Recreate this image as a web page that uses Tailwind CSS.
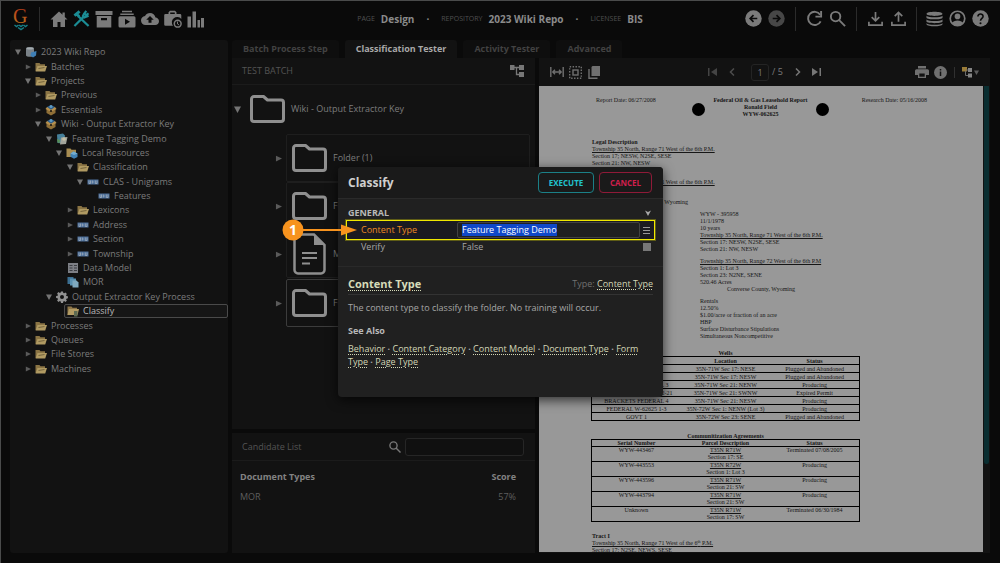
<!DOCTYPE html>
<html lang="en">
<head>
<meta charset="utf-8">
<meta name="viewport" content="width=device-width, initial-scale=1">
<title>Design - 2023 Wiki Repo</title>
<script src="https://cdn.jsdelivr.net/npm/@tailwindcss/browser@4"></script>
</head>
<body class="bg-[#0a0a0a] font-['Open_Sans','Noto_Sans',sans-serif] text-[9px] leading-[14px] text-[#7c7c7c]">
<svg class="hidden" aria-hidden="true">
  <symbol id="down" viewBox="0 0 6 6"><path fill="#747474" d="M0 .5h6L3 6z"/></symbol>
  <symbol id="right" viewBox="0 0 6 6"><path fill="#5a5a5a" d="M.8.6v5L6 3.1z"/></symbol>
  <symbol id="fold" viewBox="0 0 12 10"><path fill="#8a7444" d="M.5 1h4l1 1.300H10V9H.5z"/><path fill="#b09a62" d="M2.500 4H12l-1.800 5.500H.6z"/><path stroke="#5c4d2c" stroke-width=".7" d="M3.500 6.500l6-1"/></symbol>
  <symbol id="box" viewBox="0 0 12 12"><path fill="#2f5f8c" d="M2 3l4-2 4 2v3H2z"/><path fill="#8f6f37" d="M1.500 5.500L6 8l4.500-2.500V9L6 11.500 1.500 9z"/><path fill="#b58f4d" d="M.5 5L2 3l4 2.500L4.500 7.500zM11.500 5L10 3 6 5.500l1.500 2z"/><path fill="#2f5f8c" d="M3 3.500L6 2l3 1.500-3 1.800z"/><circle cx="6" cy="2.500" r="1.500" fill="#5f9ac0"/></symbol>
  <symbol id="repo" viewBox="0 0 12 12"><path fill="#7a8288" d="M1 2.500C1 .6 9 .6 9 2.500V9.500C9 11.200 1 11.200 1 9.500z"/><ellipse cx="5" cy="2.600" rx="3.500" ry="1" fill="#a4abb0"/><path fill="#3f7fb5" d="M6 6.500l5.500-1.500L11 9.500 8 11.500 5.500 9.500z"/></symbol>
  <symbol id="model" viewBox="0 0 12 12"><path fill="#46809a" d="M1 1.500L7 .5l2 2-1 8-6.500-.5z"/><path fill="#a2a49b" d="M5 4.500l6.500-.5L10 11 4 11.500z"/><circle cx="8" cy="6" r="1.800" fill="#c4bfa5"/><path fill="#5a9058" d="M1 6l3 1-.5 3-2-.5z"/></symbol>
  <symbol id="res" viewBox="0 0 12 12"><path fill="#a88d52" d="M.5 1.500h4l1 1.200H10V10H.5z"/><path fill="#4182b5" d="M7.500 4.500L11.500 6.500V10L8 11.800 4.500 9.800V6.500z"/><path fill="#75aed0" d="M7.500 4.500l4 2L8 8 4.500 6.500z"/></symbol>
  <symbol id="ext" viewBox="0 0 12 8"><path fill="#4c6f9a" d="M.5 1.500h11v5H.5z"/><path stroke="#9aa8b8" fill="none" stroke-width=".9" d="M2 2.500v3h1.500v-3M5.300 2.500v3M5.300 4h1.400M8.300 2.500v3H10v-3"/></symbol>
  <symbol id="data" viewBox="0 0 12 12"><path fill="#7d7f85" d="M1 1h10v10H1z"/><path stroke="#3b3d42" d="M2.500 3.500h3M2.500 6h3M2.500 8.500h3M7 3.500h3M7 6h3M7 8.500h3"/></symbol>
  <symbol id="docs" viewBox="0 0 12 12"><path fill="#3b6f92" d="M.5 1h6v7h-6z"/><path fill="#5b91b0" d="M3 2.500h6v7H3z"/><path fill="#7fa9bf" d="M5.500 4.500h4l2 2v5h-6z"/></symbol>
  <symbol id="gear" viewBox="0 0 24 24"><path fill="#929292" fill-rule="evenodd" d="M10 1h4l.6 3 1.700.7L19 3l2.800 2.800-1.700 2.600.7 1.700 3 .6v4l-3 .6-.7 1.700L21.800 19 19 21.800l-2.700-1.700-1.700.7-.6 3h-4l-.6-3-1.700-.7L5 21.800 2.200 19l1.700-2.600-.7-1.700-3-.6v-4l3-.6.7-1.700L2.200 5 5 2.200l2.700 1.700 1.700-.7zM12 8a4 4 0 100 8 4 4 0 000-8z"/></symbol>
  <symbol id="step" viewBox="0 0 12 12"><path fill="#8f7748" d="M.5 1.500h4l1 1.200H10V10H.5z"/><path fill="#b39c64" d="M2 4h10l-1.500 6H.5z"/><path fill="#5d6a52" d="M7 6h3.500v5.500H7z"/></symbol>
  <symbol id="folder" viewBox="0 0 35 28"><path fill="none" stroke="#8f8f8f" stroke-width="3" stroke-linejoin="round" d="M4 1.500h9.500L17.500 5H31a2.500 2.500 0 012.500 2.500V24a2.500 2.500 0 01-2.500 2.500H4A2.500 2.500 0 011.500 24V4A2.500 2.500 0 014 1.500z"/></symbol>
</svg>

<div class="flex min-h-screen flex-col border-t border-l border-[#4a4b4b] pr-[10px] pb-[10px] pl-[9px]">
  <header class="grid h-[39px] shrink-0 grid-cols-[1fr_auto_1fr] items-center pb-[4px]">
    <nav class="flex items-center gap-[5px]" aria-label="Tools">
      <a href="#" aria-label="Home page" class="mr-[5px] ml-[3px] block">
        <svg class="h-[24px] w-[16px]" viewBox="0 0 16 24"><defs><linearGradient id="g" x2="0" y2="1"><stop offset="0" stop-color="#b8321a"/><stop offset="1" stop-color="#b8761c"/></linearGradient></defs><text x="0" y="16" font-family="Liberation Serif, serif" font-size="20" fill="url(#g)">G</text><path fill="none" stroke="#177f86" stroke-width="1.500" d="M1.500 18l2 1.500 2-1.500M6 18l2 1.500 2-1.500M10.500 18l2 1.500 2-1.500M5 20.500l3 2 3-2"/></svg>
      </a>
      <span class="mr-[5px] h-[24px] w-px bg-[#2b2b2b]"></span>
      <button aria-label="Home"><svg class="size-[18px]" viewBox="0 0 18 18" fill="#7b7b7b"><path d="M9 1.500l3.500 3.300V2.500h2.300V7L17.500 9.500H15V17h-4.500v-5h-3v5H3V9.500H.5z"/></svg></button>
      <button aria-label="Design"><svg class="size-[17px]" viewBox="0 0 18 18" fill="none" stroke="#1b8c94"><path stroke-width="2.300" d="M5.500 6.500L16.500 17M1.500 17L12 6.500"/><path stroke-width="3" d="M1.500 6L7 1.500M3.500 4l3 3"/><path stroke-width="2.300" d="M16.500 3.500l-2.800 2-1.700-1.700L14 1M12 3.500l-1.500 3 1.500 1.500 4.500-2"/></svg></button>
      <button aria-label="Batches"><svg class="size-[18px]" viewBox="0 0 18 18" fill="#7b7b7b"><path d="M.5 1h17v4H.5zM1.700 6h14.600v11.500H1.700zM6 8v2.200h6V8z" fill-rule="evenodd"/></svg></button>
      <button aria-label="Tasks"><svg class="size-[18px]" viewBox="0 0 18 18" fill="#7b7b7b"><path d="M4 .8h10v1.500H4zM2.300 3.500h13.400V5H2.300zM2 6.300h14a1.500 1.500 0 011.500 1.500V16a1.500 1.500 0 01-1.500 1.500H2A1.500 1.500 0 01.5 16V7.800A1.500 1.500 0 012 6.300zM7 8.800v6l5-3z" fill-rule="evenodd"/></svg></button>
      <button aria-label="Imports"><svg class="size-[18px]" viewBox="0 0 24 24" fill="#7b7b7b"><path d="M19.350 10.040C18.670 6.590 15.640 4 12 4 9.110 4 6.600 5.640 5.350 8.040 2.340 8.360 0 10.910 0 14c0 3.310 2.690 6 6 6h13c2.760 0 5-2.240 5-5 0-2.640-2.050-4.780-4.650-4.960zM14 13v4h-4v-4H7l5-5 5 5h-3z"/></svg></button>
      <button aria-label="Jobs"><svg class="size-[18px]" viewBox="0 0 18 18" fill="#7b7b7b"><path fill-rule="evenodd" d="M6 .7h5l1.500 1.600V4H16a1.300 1.300 0 011.300 1.300V9A5 5 0 009 15.700H1.500A1.300 1.300 0 01.2 14.400V5.300A1.300 1.300 0 011.500 4h3V2.300zM6.200 2.500V4h4.600V2.500z"/><circle cx="13.700" cy="13.700" r="3.400" fill="#0a0a0a" stroke="#7b7b7b" stroke-width="1.500"/><path d="M13.500 11.500v2.500l1.700 1" fill="none" stroke="#7b7b7b"/></svg></button>
      <button aria-label="Statistics"><svg class="size-[18px]" viewBox="0 0 18 18" fill="#7b7b7b"><path d="M.5 6.500h3.500v11H.5zM5.500 1.500H9v16H5.500zM10.500 10H13v7.500h-2.500zM14 8h3v9.500h-3z"/></svg></button>
    </nav>
    <div class="flex items-center text-[10px] font-bold text-[#8a8a8a]">
      <span class="mr-[6px] text-[7px] font-normal text-[#505050]">PAGE</span>Design
      <span class="mx-[12px]">·</span>
      <span class="mr-[6px] text-[7px] font-normal text-[#505050]">REPOSITORY</span>2023 Wiki Repo
      <span class="mx-[12px]">·</span>
      <span class="mr-[6px] text-[7px] font-normal text-[#505050]">LICENSEE</span>BIS
    </div>
    <div class="flex items-center justify-end gap-[6px] pr-px">
      <button aria-label="Back"><svg class="size-[17px]" viewBox="0 0 18 18"><circle cx="9" cy="9" r="8.700" fill="#7b7b7b"/><path d="M13 9H5.500M9 5.500L5.500 9 9 12.500" fill="none" stroke="#0a0a0a" stroke-width="1.800"/></svg></button>
      <button aria-label="Forward"><svg class="size-[17px]" viewBox="0 0 18 18"><circle cx="9" cy="9" r="8.700" fill="#474747"/><path d="M5 9h7.500M9 5.500L12.500 9 9 12.500" fill="none" stroke="#0a0a0a" stroke-width="1.800"/></svg></button>
      <span class="mx-[4px] h-[24px] w-px bg-[#2b2b2b]"></span>
      <button aria-label="Refresh"><svg class="size-[17px]" viewBox="0 0 18 18" fill="none" stroke="#7b7b7b" stroke-width="2"><path d="M15 5A7 7 0 1015.500 12"/><path d="M16 1v6h-6"/></svg></button>
      <button aria-label="Search"><svg class="size-[17px]" viewBox="0 0 18 18" fill="none" stroke="#7b7b7b" stroke-width="2"><circle cx="7" cy="7" r="5"/><path d="M10.500 10.500l6.500 6.500"/></svg></button>
      <span class="mx-[4px] h-[24px] w-px bg-[#2b2b2b]"></span>
      <button aria-label="Download"><svg class="size-[17px]" viewBox="0 0 18 18" fill="none" stroke="#7b7b7b" stroke-width="1.800"><path d="M9 2v9M5 7.500l4 4 4-4M2 12.500V16h14v-3.500"/></svg></button>
      <button aria-label="Upload"><svg class="size-[17px]" viewBox="0 0 18 18" fill="none" stroke="#7b7b7b" stroke-width="1.800"><path d="M9 12.500V3M5 6.500l4-4 4 4M2 12.500V16h14v-3.500"/></svg></button>
      <span class="mx-[3px] h-[24px] w-px bg-[#2b2b2b]"></span>
      <button aria-label="Repository"><svg class="size-[17px]" viewBox="0 0 18 18" fill="#7b7b7b"><path d="M.5 4C.5 1 17.500 1 17.500 4S.5 7 .5 4zM.5 6c2 2.200 15 2.200 17 0v2.200c-1 2.300-16 2.300-17 0zM.5 10c2 2.200 15 2.200 17 0v2.200c-1 2.300-16 2.300-17 0zM.5 14c2 2.200 15 2.200 17 0v1c-1 3-16 3-17 0z"/></svg></button>
      <button aria-label="Account"><svg class="size-[17px]" viewBox="0 0 18 18"><circle cx="9" cy="9" r="7.700" fill="none" stroke="#7b7b7b" stroke-width="1.800"/><circle cx="9" cy="6.800" r="3" fill="#7b7b7b"/><path fill="#7b7b7b" d="M3 14c2-4 10-4 12 0-3 4-9 4-12 0z"/></svg></button>
      <button aria-label="Help"><svg class="size-[17px]" viewBox="0 0 18 18"><circle cx="9" cy="9" r="8.700" fill="#7b7b7b"/><path d="M6.300 7C6.300 3.200 11.800 3.500 11.700 7 11.700 9 9 9 9 11.500" fill="none" stroke="#0a0a0a" stroke-width="1.700"/><circle cx="9" cy="14" r="1.100" fill="#0a0a0a"/></svg></button>
    </div>
  </header>

  <main class="grid flex-1 grid-cols-[218px_1fr] gap-[4px]">
    <nav class="rounded-[3px] bg-[#121212] pt-[5px]" aria-label="Node tree">
      <ul class="grid min-h-[331px] auto-rows-fr leading-[12px] *:flex *:items-center *:gap-[4px] *:whitespace-nowrap">
        <li class="pl-[5px]"><svg class="size-[6px]"><use href="#down"/></svg><svg class="size-[12px]"><use href="#repo"/></svg>2023 Wiki Repo</li>
        <li class="pl-[15px]"><svg class="size-[6px]"><use href="#right"/></svg><svg class="h-[10px] w-[12px]"><use href="#fold"/></svg>Batches</li>
        <li class="pl-[15px]"><svg class="size-[6px]"><use href="#down"/></svg><svg class="h-[10px] w-[12px]"><use href="#fold"/></svg>Projects</li>
        <li class="pl-[25px]"><svg class="size-[6px]"><use href="#right"/></svg><svg class="h-[10px] w-[12px]"><use href="#fold"/></svg>Previous</li>
        <li class="pl-[25px]"><svg class="size-[6px]"><use href="#right"/></svg><svg class="size-[12px]"><use href="#box"/></svg>Essentials</li>
        <li class="pl-[25px]"><svg class="size-[6px]"><use href="#down"/></svg><svg class="size-[12px]"><use href="#box"/></svg>Wiki - Output Extractor Key</li>
        <li class="pl-[36px]"><svg class="size-[6px]"><use href="#down"/></svg><svg class="size-[12px]"><use href="#model"/></svg>Feature Tagging Demo</li>
        <li class="pl-[46px]"><svg class="size-[6px]"><use href="#down"/></svg><svg class="size-[12px]"><use href="#res"/></svg>Local Resources</li>
        <li class="pl-[57px]"><svg class="size-[6px]"><use href="#down"/></svg><svg class="h-[10px] w-[12px]"><use href="#fold"/></svg>Classification</li>
        <li class="pl-[67px]"><svg class="size-[6px]"><use href="#down"/></svg><svg class="h-[8px] w-[12px]"><use href="#ext"/></svg>CLAS - Unigrams</li>
        <li class="pl-[88px]"><svg class="h-[8px] w-[12px]"><use href="#ext"/></svg>Features</li>
        <li class="pl-[57px]"><svg class="size-[6px]"><use href="#right"/></svg><svg class="h-[10px] w-[12px]"><use href="#fold"/></svg>Lexicons</li>
        <li class="pl-[57px]"><svg class="size-[6px]"><use href="#right"/></svg><svg class="h-[8px] w-[12px]"><use href="#ext"/></svg>Address</li>
        <li class="pl-[57px]"><svg class="size-[6px]"><use href="#right"/></svg><svg class="h-[8px] w-[12px]"><use href="#ext"/></svg>Section</li>
        <li class="pl-[57px]"><svg class="size-[6px]"><use href="#right"/></svg><svg class="h-[8px] w-[12px]"><use href="#ext"/></svg>Township</li>
        <li class="pl-[57px]"><svg class="size-[12px]"><use href="#data"/></svg>Data Model</li>
        <li class="pl-[57px]"><svg class="size-[12px]"><use href="#docs"/></svg>MOR</li>
        <li class="pl-[36px]"><svg class="size-[6px]"><use href="#down"/></svg><svg class="size-[12px]"><use href="#gear"/></svg>Output Extractor Key Process</li>
        <li class="ml-[54px] rounded-[2px] border border-[#4a4a4a] bg-[#161616] pl-[2px] text-[#b8b8b8]"><svg class="size-[12px]"><use href="#step"/></svg>Classify</li>
        <li class="pl-[15px]"><svg class="size-[6px]"><use href="#right"/></svg><svg class="h-[10px] w-[12px]"><use href="#fold"/></svg>Processes</li>
        <li class="pl-[15px]"><svg class="size-[6px]"><use href="#right"/></svg><svg class="h-[10px] w-[12px]"><use href="#fold"/></svg>Queues</li>
        <li class="pl-[15px]"><svg class="size-[6px]"><use href="#right"/></svg><svg class="h-[10px] w-[12px]"><use href="#fold"/></svg>File Stores</li>
        <li class="pl-[15px]"><svg class="size-[6px]"><use href="#right"/></svg><svg class="h-[10px] w-[12px]"><use href="#fold"/></svg>Machines</li>
      </ul>
    </nav>

    <div class="flex min-w-0 flex-col">
      <div class="flex gap-[6px] font-bold text-[#424242] *:h-[18px] *:rounded-t-[3px] *:bg-[#0e0e0e] *:px-[11px]" role="tablist">
        <button role="tab">Batch Process Step</button>
        <button role="tab" aria-selected="true" class="bg-[#121212]! text-[#a8a8a8]">Classification Tester</button>
        <button role="tab">Activity Tester</button>
        <button role="tab">Advanced</button>
      </div>
      <div class="grid flex-1 grid-cols-[303fr_451fr] gap-[4px]">
        <div class="flex flex-col gap-[4px]">
          <section class="min-h-[371px] bg-[#121212]">
            <div class="flex h-[27px] items-center justify-between border-b border-[#1b1b1b] pr-[11px] pl-[10px] text-[#545454]">
              TEST BATCH
              <button aria-label="Tree view"><svg class="h-[12px] w-[14px]" viewBox="0 0 14 12" fill="#777"><path d="M0 0h4.500v5H0zM9 0h5v5H9zM9 7h5v5H9z"/><path d="M4 2.500h5M6.500 2.500v7H9" fill="none" stroke="#777" stroke-width="1.300"/></svg></button>
            </div>
            <div class="flex items-center pt-[10px] pl-[2px]">
              <svg class="mr-[9px] size-[7px]"><use href="#down"/></svg><svg class="mr-[6px] h-[28px] w-[35px]"><use href="#folder"/></svg>Wiki - Output Extractor Key
            </div>
            <ul class="mt-[11px] mr-[5px] ml-[43px] *:flex *:h-[48px] *:items-center">
              <li><svg class="mr-[4px] size-[7px]"><use href="#right"/></svg><div class="flex h-full flex-1 items-center gap-[6px] rounded-[2px] border border-[#1e1e1e] pl-[5px]"><svg class="h-[28px] w-[35px]"><use href="#folder"/></svg>Folder (1)</div></li>
              <li><svg class="mr-[4px] size-[7px]"><use href="#right"/></svg><div class="flex h-full flex-1 items-center gap-[6px] rounded-[2px] border border-[#1e1e1e] pl-[5px]"><svg class="h-[28px] w-[35px]"><use href="#folder"/></svg>Folder (2)</div></li>
              <li><svg class="mr-[4px] size-[7px]"><use href="#right"/></svg><div class="flex h-full flex-1 items-center gap-[6px] rounded-[2px] border border-[#1e1e1e] pl-[5px]"><svg class="h-[42px] w-[35px]" viewBox="0 0 35 42"><path fill="none" stroke="#8f8f8f" stroke-width="2.500" d="M5 1.500h17L32.500 12v25a3.500 3.500 0 01-3.500 3.500H6A3.500 3.500 0 012.500 37V5A3.500 3.500 0 015 1.500z"/><path fill="#8f8f8f" d="M22 1.500V12h10.500z"/><path stroke="#8f8f8f" stroke-width="2" d="M10 20h15M10 25h15M10 30.500h8"/></svg>MOR</div></li>
              <li class="mt-px"><svg class="mr-[4px] size-[7px]"><use href="#right"/></svg><div class="flex h-full flex-1 items-center gap-[6px] rounded-[2px] border border-[#3c3c3c] pl-[5px]"><svg class="h-[28px] w-[35px]"><use href="#folder"/></svg>Folder (3)</div></li>
            </ul>
          </section>
          <section class="flex-1 bg-[#121212]">
            <div class="flex h-[28px] items-center border-b border-[#1b1b1b] pr-[11px] pl-[10px] text-[#545454]">
              <label for="cand" class="flex-1">Candidate List</label>
              <svg class="mr-[4px] size-[12px]" viewBox="0 0 12 12" fill="none" stroke="#777" stroke-width="1.400"><circle cx="4.500" cy="4.500" r="3.600"/><path d="M7 7l4.500 4.500"/></svg>
              <input id="cand" type="text" class="h-[18px] w-[119px] rounded-[3px] border border-[#262626] bg-[#101010] px-1">
            </div>
            <table class="mt-[8px] ml-[8px] w-[276px] text-left">
              <thead><tr class="h-[16px] text-[#828282]"><th class="p-0 font-bold">Document Types</th><th class="p-0 text-right font-bold">Score</th></tr></thead>
              <tbody><tr class="h-[24px] text-[#5e5e5e]"><td class="p-0">MOR</td><td class="p-0 text-right">57%</td></tr></tbody>
            </table>
          </section>
        </div>

        <section class="flex min-w-0 flex-col bg-[#121212]" aria-label="Document viewer">
          <div class="flex h-[28px] items-center pr-[11px] pl-[11px]">
            <button aria-label="Fit width"><svg class="h-[12px] w-[14px]" viewBox="0 0 14 12" fill="none" stroke="#707070" stroke-width="1.400"><path d="M.8 1v10M13.200 1v10M3 6h8M5 3.800L2.800 6 5 8.200M9 3.800L11.200 6 9 8.200"/></svg></button>
            <button aria-label="Select" class="ml-[5px]"><svg class="size-[13px]" viewBox="0 0 13 13" fill="none" stroke="#707070" stroke-width="1.400"><rect x=".7" y=".7" width="11.600" height="11.600" stroke-dasharray="1.450"/><rect x="4" y="4" width="5" height="5"/></svg></button>
            <button aria-label="Copy" class="ml-[6px]"><svg class="size-[13px]" viewBox="0 0 13 13"><path fill="#707070" d="M4.500 0H12v10H3.500V1z"/><path fill="none" stroke="#707070" stroke-width="1.400" d="M1 3v9.300h8.500"/></svg></button>
            <div class="flex flex-1 items-center justify-center pl-[13px]">
              <button aria-label="First page"><svg class="h-[8px] w-[9px]" viewBox="0 0 9 8" fill="#444"><path d="M0 0h1.500v8H0zM9 0v8L3 4z"/></svg></button>
              <button aria-label="Previous page" class="ml-[12px]"><svg class="h-[8px] w-[6px]" viewBox="0 0 6 8" fill="none" stroke="#4d4d4d" stroke-width="1.500"><path d="M5 .5L1.500 4 5 7.500"/></svg></button>
              <input aria-label="Page" value="1" class="mr-[3px] ml-[16px] h-[17px] w-[18px] rounded-[3px] border border-[#242424] text-center">/ 5
              <button aria-label="Next page" class="ml-[12px]"><svg class="h-[8px] w-[6px]" viewBox="0 0 6 8" fill="none" stroke="#777" stroke-width="1.500"><path d="M1 .5L4.500 4 1 7.500"/></svg></button>
              <button aria-label="Last page" class="ml-[11px]"><svg class="h-[8px] w-[9px]" viewBox="0 0 9 8" fill="#777"><path d="M7.500 0H9v8H7.500zM0 0v8l6-4z"/></svg></button>
            </div>
            <button aria-label="Print"><svg class="h-[12px] w-[14px]" viewBox="0 0 14 12"><path fill="#707070" d="M3 0h8v2.500H3zM1.500 3.300h11A1.500 1.500 0 0114 4.800V9h-3v3H3V9H0V4.800a1.500 1.500 0 011.500-1.500z"/><path fill="#121212" d="M4.300 7.500h5.400v3.200H4.300z"/></svg></button>
            <button aria-label="Information" class="ml-[5px]"><svg class="size-[13px]" viewBox="0 0 13 13"><circle cx="6.500" cy="6.500" r="6.500" fill="#707070"/><path stroke="#121212" stroke-width="1.500" d="M6.500 5.500V10M6.500 3v1.400"/></svg></button>
            <span class="mx-[7px] h-[11px] w-px bg-[#303030]"></span>
            <button aria-label="View options" class="flex items-center gap-[2px]"><svg class="h-[11px] w-[10px]" viewBox="0 0 10 11"><path fill="#9a7c38" d="M0 0h5v4.500H0z"/><path fill="#858585" d="M6 1h4v4H6zM6 6.500h4v4H6z"/><path fill="none" stroke="#6c6c6c" d="M4 3h2M3.500 4v4.500H6"/></svg><svg class="size-[5px]" viewBox="0 0 6 6"><path fill="#5c5c5c" d="M0 .5h6L3 6z"/></svg></button>
          </div>
          <div class="flex flex-1">
            <article class="h-[466px] min-w-0 flex-1 overflow-hidden bg-[#989898] font-['Liberation_Serif',serif] text-[6px] leading-[7px] whitespace-nowrap text-[#161616]">
              <div class="flex items-start pt-[11px] pr-[56px] pl-[57px]">
                <p class="w-[96px]">Report Date: 06/27/2008</p>
                <span class="mt-[6px] size-[13px] rounded-full bg-black"></span>
                <p class="flex-1 text-center font-bold">Federal Oil &amp; Gas Leasehold Report<br>Ronald Field<br>WYW-062625</p>
                <span class="mt-[6px] size-[13px] rounded-full bg-black"></span>
                <p class="w-[98px] text-right">Research Date: 05/16/2008</p>
              </div>
              <div class="pt-[21px] pl-[53px]">
                <p><b>Legal Description</b><br><u>Township 35 North, Range 71 West of the 6th P.M.</u><br>Section 17; NESW, N2SE, SESE<br>Section 21: NW, NESW</p>
                <p class="mt-[12px]"><u>Township 35 North, Range 71 West of the 6th P.M.</u></p>
                <p class="mt-[13px] pl-[28px]">Converse County, Wyoming</p>
              </div>
              <div class="pt-[5px] pl-[161px]">
                <p>WYW - 395958<br>11/1/1978<br>10 years<br><u>Township 35 North, Range 71 West of the 6th P.M.</u><br>Section 17: NESW, N2SE, SESE<br>Section 21: NW, NESW</p>
                <p class="mt-[5px]"><u>Township 35 North, Range 72 West of the 6th P.M</u><br>Section 1: Lot 3<br>Section 23: N2NE, SENE<br>520.46 Acres<br><span class="pl-[27px]">Converse County, Wyoming</span></p>
                <p class="mt-[5px]">Rentals<br>12.50%<br>$1.00/acre or fraction of an acre<br>HBP<br>Surface Disturbance Stipulations<br>Simultaneous Noncompetitive</p>
              </div>
              <table class="mt-[10px] ml-[52px] w-[269px] table-fixed border-collapse text-center *:[tbody]:*:h-[8px] *:[tbody]:*:border *:[tbody]:*:border-black">
                <caption class="leading-[6px] font-bold">Wells</caption>
                <tbody class="leading-[6px]">
                  <tr class="font-bold"><th class="p-0">Name</th><th class="p-0">Location</th><th class="p-0">Status</th></tr>
                  <tr><td class="p-0">FEDERAL 1</td><td class="p-0">35N-71W Sec 17: NESE</td><td class="p-0">Plugged and Abandoned</td></tr>
                  <tr><td class="p-0">FEDERAL 2</td><td class="p-0">35N-71W Sec 17: NESW</td><td class="p-0">Plugged and Abandoned</td></tr>
                  <tr><td class="p-0">BRACKETS FEDERAL 3</td><td class="p-0">35N-71W Sec 21: NENW</td><td class="p-0">Producing</td></tr>
                  <tr><td class="p-0">BRACKETS FEDERAL 2-21</td><td class="p-0">35N-71W Sec 21: SWNW</td><td class="p-0">Expired Permit</td></tr>
                  <tr><td class="p-0">BRACKETS FEDERAL 4</td><td class="p-0">35N-71W Sec 21: NESW</td><td class="p-0">Producing</td></tr>
                  <tr><td class="p-0">FEDERAL W-62625 1-3</td><td class="p-0">35N-72W Sec 1: NENW (Lot 3)</td><td class="p-0">Producing</td></tr>
                  <tr><td class="p-0">GOVT 1</td><td class="p-0">35N-72W Sec 23: SENE</td><td class="p-0">Plugged and Abandoned</td></tr>
                </tbody>
              </table>
              <table class="mt-[12px] ml-[52px] w-[269px] table-fixed border-collapse text-center align-top *:[tbody]:*:border *:[tbody]:*:border-black">
                <caption class="leading-[6px] font-bold">Communitization Agreements</caption>
                <tbody class="leading-[7px]">
                  <tr class="leading-[6px]"><th class="p-0">Serial Number</th><th class="p-0">Parcel Description</th><th class="p-0">Status</th></tr>
                  <tr class="align-top"><td class="p-0">WYW-443467</td><td class="p-0"><u>T35N R71W</u><br>Section 17: SE</td><td class="p-0">Terminated 07/08/2005</td></tr>
                  <tr class="align-top"><td class="p-0">WYW-443553</td><td class="p-0"><u>T35N R72W</u><br>Section 1: Lot 3</td><td class="p-0">Producing</td></tr>
                  <tr class="align-top"><td class="p-0">WYW-443596</td><td class="p-0"><u>T35N R71W</u><br>Section 21: SW</td><td class="p-0">Producing</td></tr>
                  <tr class="align-top"><td class="p-0">WYW-443794</td><td class="p-0"><u>T35N R71W</u><br>Section 21: SW</td><td class="p-0">Producing</td></tr>
                  <tr class="align-top"><td class="p-0">Unknown</td><td class="p-0"><u>T35N R71W</u><br>Section 17: SW</td><td class="p-0">Terminated 06/30/1984</td></tr>
                </tbody>
              </table>
              <p class="mt-[11px] ml-[53px]"><b>Tract I</b><br><u>Township 35 North, Range 71 West of the 6<sup class="text-[4px]">th</sup> P.M.</u><br>Section 17: N2SE, NEWS, SESE</p>
            </article>
            <div class="w-[7px] pr-px pl-px"><div class="h-[378px] rounded-b-[2px] bg-[#0a2e31]"></div></div>
          </div>
        </section>
      </div>
    </div>
  </main>
</div>

<section role="dialog" aria-labelledby="dlg" class="absolute top-[167px] left-[338px] min-h-[230px] w-[325px] rounded-[4px] bg-[#202020] text-[#a6a6a6] shadow-[0_3px_12px_rgba(0,0,0,0.7)]">
  <div class="flex h-[32px] items-center gap-[5px] rounded-t-[4px] border-b border-[#2a2a2a] bg-[#1a1a1a] pr-[11px] pl-[10px]">
    <h2 id="dlg" class="flex-1 text-[12px] font-bold text-[#cfcfcf]">Classify</h2>
    <button class="h-[21px] w-[56px] rounded-[4px] border border-[#1b8087] text-[8px] font-bold text-[#22c3ce]">EXECUTE</button>
    <button class="h-[21px] w-[53px] rounded-[4px] border border-[#8f1a38] text-[8px] font-bold text-[#cf1f4c]">CANCEL</button>
  </div>
  <div class="flex h-[21px] items-end justify-between pr-[12px] pl-[10px] font-bold text-[#b8b8b8]">GENERAL<svg class="mb-[4px] size-[6px]" viewBox="0 0 6 6"><path fill="#a8a8a8" d="M0 .5l3 1.500 3-1.500L3 6z"/></svg></div>
  <div class="mx-[8px] flex h-[20px] items-center border border-[#f0e800] bg-[#1b1b20] pr-[4px] pl-[14px] outline outline-[#f0e800]/30">
    <label for="ct" class="w-[96px] text-[#ee8a22]">Content Type</label>
    <div class="flex h-[16px] flex-1 items-center rounded-[2px] border border-[#424242] bg-[#202020] pl-[4px]"><input id="ct" value="Feature Tagging Demo" class="field-sizing-content bg-[#0f48c8] leading-[12px] font-medium text-white"></div>
    <button aria-label="Choose" class="ml-[3px]"><svg class="size-[7px]" viewBox="0 0 7 7" stroke="#999"><path d="M0 .5h7M0 3.500h7M0 6.500h7"/></svg></button>
  </div>
  <div class="flex h-[14px] items-center pr-[12px] pl-[23px]">
    <label for="vf" class="w-[101px]">Verify</label><span class="flex-1">False</span>
    <input id="vf" type="checkbox" class="size-[8px] appearance-none bg-[#777]">
  </div>
  <div class="mt-[12px] border-t border-[#292929] px-[10px] pt-[10px]">
    <div class="flex items-center justify-between border-b border-[#333] pb-[3px] text-[#707070]">
      <a href="#" class="text-[11px] font-bold text-[#d6dbb8] underline decoration-dotted underline-offset-2">Content Type</a>
      <span>Type: <a href="#" class="text-[#d2d6b6] underline decoration-dotted underline-offset-2">Content Type</a></span>
    </div>
    <p class="mt-[6px]">The content type to classify the folder. No training will occur.</p>
    <h3 class="mt-[9px] font-bold text-[#b8b8b8]">See Also</h3>
    <p class="mt-[4px] leading-[13px] font-bold *:font-normal *:text-[#d2d6b6] *:underline *:decoration-dotted *:underline-offset-2"><a href="#">Behavior</a> · <a href="#">Content Category</a> · <a href="#">Content Model</a> · <a href="#">Document Type</a> · <a href="#">Form Type</a> · <a href="#">Page Type</a></p>
  </div>
</section>

<svg class="absolute top-[219px] left-[282px] h-[22px] w-[76px]" viewBox="0 0 76 22" aria-label="Step 1">
  <path stroke="#f7931e" stroke-width="2" d="M11 11h50"/><path fill="#f7931e" d="M59 5.500L75 11 59 16.500z"/><circle cx="11" cy="11" r="10.500" fill="#f7931e"/>
  <text x="11" y="16" text-anchor="middle" font-family="Open Sans, sans-serif" font-weight="700" font-size="14" fill="#fff">1</text>
</svg>
</body>
</html>
